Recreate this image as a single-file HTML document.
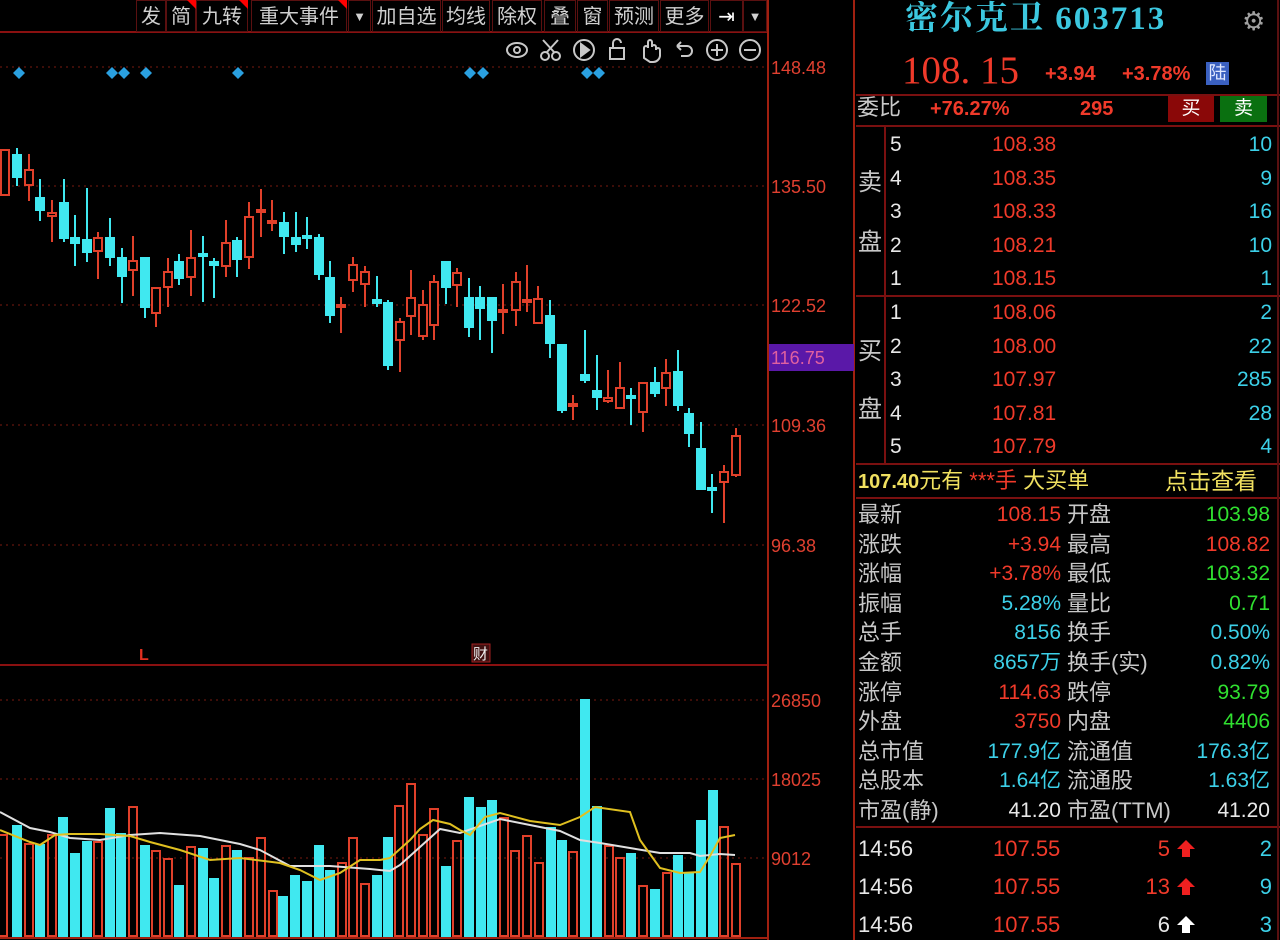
<!DOCTYPE html>
<html style="overflow:hidden;width:1280px;height:940px"><head><meta charset="utf-8"><style>
*{margin:0;padding:0;box-sizing:border-box}
body{width:1280px;height:940px;background:#000;overflow:hidden;position:relative;font-family:"Liberation Sans","Noto Sans CJK SC",sans-serif}
.t{position:absolute;white-space:nowrap;line-height:1}
.g{color:#c8c8c8}.r{color:#f03a2a}.c{color:#3cd0e8}.gr{color:#30e030}.w{color:#e8e8e8}.y{color:#f0e060}
.btn{position:absolute;top:0;height:32px;border:1px solid #5a1010;color:#d0d0d0;font-size:20px;line-height:32px;text-align:center;font-family:"Liberation Sans","Noto Sans CJK SC",sans-serif}
.tri{position:absolute;top:0;width:0;height:0;border-left:9px solid transparent;border-top:9px solid #f00}
.hl{position:absolute;height:2px;background:#7a1010}
.L{font-size:22px;color:#c8c8c8}
</style></head><body>

<svg width="856" height="940" style="position:absolute;left:0;top:0">
<g stroke="#7a1a10" stroke-dasharray="2,4" stroke-width="1">
<line x1="0" y1="67" x2="768" y2="67"/><line x1="0" y1="186" x2="768" y2="186"/><line x1="0" y1="305" x2="768" y2="305"/><line x1="0" y1="425" x2="768" y2="425"/><line x1="0" y1="545" x2="768" y2="545"/>
<line x1="0" y1="700" x2="768" y2="700"/><line x1="0" y1="779" x2="768" y2="779"/><line x1="0" y1="858" x2="768" y2="858"/>
</g>
<line x1="0" y1="32" x2="768" y2="32" stroke="#8a1010" stroke-width="2"/>
<line x1="0" y1="665" x2="768" y2="665" stroke="#8a1010" stroke-width="2"/>
<line x1="768" y1="0" x2="768" y2="940" stroke="#a02010" stroke-width="2"/>
<line x1="854" y1="0" x2="854" y2="940" stroke="#a02010" stroke-width="2"/>
<line x1="0" y1="938" x2="768" y2="938" stroke="#a02010" stroke-width="2"/>
<rect x="769" y="344" width="85" height="27" fill="#5a18a8"/>
<g font-family="Liberation Sans" font-size="18" fill="#e04030">
<text x="771" y="74">148.48</text><text x="771" y="193">135.50</text><text x="771" y="312">122.52</text><text x="771" y="364" fill="#e060a0">116.75</text><text x="771" y="432">109.36</text><text x="771" y="552">96.38</text>
<text x="771" y="707">26850</text><text x="771" y="786">18025</text><text x="771" y="865">9012</text>
</g>
<g fill="#2aa0e0">
<path d="M19 67l6 6-6 6-6-6z"/><path d="M112 67l6 6-6 6-6-6z"/><path d="M124 67l6 6-6 6-6-6z"/><path d="M146 67l6 6-6 6-6-6z"/><path d="M238 67l6 6-6 6-6-6z"/><path d="M470 67l6 6-6 6-6-6z"/><path d="M483 67l6 6-6 6-6-6z"/><path d="M587 67l6 6-6 6-6-6z"/><path d="M599 67l6 6-6 6-6-6z"/>
</g>
<g stroke="#c8c8c8" stroke-width="2" fill="none">
<ellipse cx="517" cy="50" rx="10" ry="7"/><circle cx="517" cy="50" r="3"/>
<circle cx="545" cy="56" r="4"/><circle cx="556" cy="56" r="4"/><path d="M547 52l11-12M554 52l-11-12"/>
<circle cx="584" cy="50" r="10"/><path d="M581 44v12l8-6z" fill="#c8c8c8"/>
<rect x="610" y="48" width="14" height="11"/><path d="M613 48v-5a4 4 0 0 1 8 0"/>
<path d="M644 58v-10a2 2 0 0 1 4 0v-6a2 2 0 0 1 4 0v5a2 2 0 0 1 4 0v3a2 2 0 0 1 4 0v6a7 7 0 0 1-7 6h-3z"/>
<path d="M677 46h10a5 5 0 0 1 0 10h-6M677 46l4-4M677 46l4 4"/>
<circle cx="717" cy="50" r="10"/><path d="M711 50h12M717 44v12"/>
<circle cx="750" cy="50" r="10"/><path d="M744 50h12"/>
</g>
<text x="139" y="660" font-size="16" fill="#e03020" font-family="Liberation Sans" font-weight="bold">L</text>
<rect x="472" y="644" width="18" height="18" fill="#401010" stroke="#a02020"/>
<text x="473" y="659" font-size="15" fill="#f0f0f0" font-family="Noto Sans CJK SC">财</text>

<g id="candles" stroke-width="2"></g>
<g id="vols" stroke-width="2"></g>
<polyline fill="none" stroke="#e0e0e0" stroke-width="2" points="0,812 30,828 50,832 70,838 100,840 130,835 160,833 200,836 240,844 260,850 290,866 330,866 370,869 390,871 400,865 420,847 440,829 460,833 500,819 540,827 560,831 580,840 600,843 630,848 660,853 690,853 700,856 720,854 735,855"/>
<polyline fill="none" stroke="#e0c020" stroke-width="2" points="0,830 30,842 40,845 55,835 70,834 100,834 130,836 150,842 180,850 210,860 240,858 280,863 300,870 320,880 340,873 360,860 380,860 390,858 410,840 420,829 433,820 450,824 460,830 470,835 485,817 500,813 530,821 560,825 580,817 595,807 630,812 640,840 660,868 680,873 700,872 710,856 720,838 735,835"/>
</svg>

<script>
(function(){
var C=[[5,150,195,150,195,'r'],[17,148,186,155,177,'c'],[29,154,201,170,185,'r'],[40,179,221,198,210,'c'],[52,200,242,213,216,'r'],[64,179,242,203,238,'c'],[75,215,266,238,243,'c'],[87,188,262,240,252,'c'],[98,232,279,238,251,'r'],[110,218,266,238,257,'c'],[122,248,303,258,276,'c'],[133,236,296,261,270,'r'],[145,258,318,258,307,'c'],[156,288,327,288,313,'r'],[168,258,307,272,287,'r'],[179,254,285,262,278,'c'],[191,230,296,258,277,'r'],[203,236,302,254,256,'c'],[214,258,298,262,265,'c'],[226,220,277,243,266,'r'],[237,237,277,241,259,'c'],[249,202,269,217,257,'r'],[261,189,237,210,212,'r'],[272,200,231,221,223,'r'],[284,212,254,223,236,'c'],[296,212,252,238,244,'c'],[307,217,249,236,238,'c'],[319,234,280,238,274,'c'],[330,261,323,278,315,'c'],[341,297,333,305,306,'r'],[353,257,292,265,280,'r'],[365,266,307,272,284,'r'],[377,276,307,300,303,'c'],[388,300,370,303,365,'c'],[400,318,372,322,340,'r'],[411,270,335,298,316,'r'],[423,290,340,305,336,'r'],[434,275,340,282,325,'r'],[446,262,304,262,287,'c'],[457,268,307,273,285,'r'],[469,278,337,298,327,'c'],[480,286,340,298,308,'c'],[492,298,353,298,320,'c'],[503,284,334,310,312,'r'],[516,272,326,282,310,'r'],[527,265,312,300,302,'r'],[538,286,323,299,323,'r'],[550,300,358,316,343,'c'],[562,345,413,345,410,'c'],[573,395,420,404,406,'r'],[585,330,383,375,380,'c'],[597,355,410,391,397,'c'],[608,370,403,398,401,'r'],[620,362,408,388,408,'r'],[631,388,425,396,398,'c'],[643,383,432,383,412,'r'],[655,367,397,383,393,'c'],[666,359,406,373,388,'r'],[678,350,411,372,405,'c'],[689,408,447,414,433,'c'],[701,422,490,449,489,'c'],[712,474,513,488,490,'c'],[724,465,523,472,482,'r'],[736,428,477,436,475,'r']];
var V=[[3,835,'r'],[17,826,'c'],[29,844,'r'],[40,845,'c'],[52,835,'r'],[63,818,'c'],[75,854,'c'],[87,842,'c'],[98,842,'r'],[110,809,'c'],[121,834,'c'],[133,807,'r'],[145,846,'c'],[156,851,'r'],[168,859,'r'],[179,886,'c'],[191,847,'r'],[203,849,'c'],[214,879,'c'],[226,846,'r'],[237,851,'c'],[249,858,'r'],[261,838,'r'],[273,891,'r'],[283,897,'c'],[295,876,'c'],[307,882,'c'],[319,846,'c'],[330,871,'c'],[342,863,'r'],[353,838,'r'],[365,884,'r'],[377,876,'c'],[388,838,'c'],[399,806,'r'],[411,784,'r'],[423,835,'r'],[434,809,'r'],[446,867,'c'],[457,841,'r'],[469,798,'c'],[481,808,'c'],[492,801,'c'],[504,818,'r'],[515,851,'r'],[527,836,'r'],[539,863,'r'],[551,828,'c'],[562,841,'c'],[573,852,'r'],[585,700,'c'],[597,807,'c'],[609,846,'r'],[620,858,'r'],[631,854,'c'],[643,886,'r'],[655,890,'c'],[667,873,'r'],[678,856,'c'],[689,873,'c'],[701,821,'c'],[713,791,'c'],[724,827,'r'],[736,864,'r']];
var R='#e0402a',Cy='#40e8f0',s='';
C.forEach(function(a){var col=a[5]=='r'?R:Cy;var h=Math.max(a[4]-a[3],2);
s+='<line x1="'+a[0]+'" y1="'+a[1]+'" x2="'+a[0]+'" y2="'+a[2]+'" stroke="'+col+'"/>';
s+='<rect x="'+(a[0]-4)+'" y="'+a[3]+'" width="8" height="'+h+'" fill="'+(a[5]=='r'?'#000':Cy)+'" stroke="'+col+'"/>';});
document.getElementById('candles').innerHTML=s;s='';
V.forEach(function(a){var col=a[2]=='r'?R:Cy;
s+='<rect x="'+(a[0]-4)+'" y="'+a[1]+'" width="8" height="'+(936-a[1])+'" fill="'+(a[2]=='r'?'none':Cy)+'" stroke="'+col+'"/>';});
document.getElementById('vols').innerHTML=s;
})();
</script>

<!-- toolbar -->
<div class="btn" style="left:136px;width:30px">发</div>
<div class="btn" style="left:166px;width:30px">简</div><div class="tri" style="left:187px"></div>
<div class="btn" style="left:196px;width:52px">九转</div><div class="tri" style="left:239px"></div>
<div class="btn" style="left:251px;width:96px">重大事件</div><div class="tri" style="left:338px"></div>
<div class="btn" style="left:348px;width:23px;font-size:13px">▼</div>
<div class="btn" style="left:372px;width:69px">加自选</div>
<div class="btn" style="left:442px;width:48px">均线</div>
<div class="btn" style="left:492px;width:50px">除权</div>
<div class="btn" style="left:544px;width:32px">叠</div>
<div class="btn" style="left:577px;width:31px">窗</div>
<div class="btn" style="left:609px;width:50px">预测</div>
<div class="btn" style="left:660px;width:49px">更多</div>
<div class="btn" style="left:710px;width:33px;color:#fff">⇥</div>
<div class="btn" style="left:743px;width:24px;font-size:13px">▼</div>

<!-- right panel -->
<div class="t" style="left:905px;top:3px;font-size:33px;letter-spacing:2px;color:#3cc8e0;font-family:'Liberation Serif','Noto Serif CJK SC',serif;font-weight:bold">密尔克卫 603713</div>
<div class="t" style="left:1242px;top:8px;font-size:26px;color:#a0a0a0">⚙</div>
<div class="t r" style="left:902px;top:51px;font-size:39px;font-family:'Liberation Serif','Noto Serif CJK SC',serif">108. 15</div>
<div class="t r" style="left:1045px;top:64px;font-size:20px;font-weight:bold">+3.94</div>
<div class="t r" style="left:1122px;top:64px;font-size:20px;font-weight:bold">+3.78%</div>
<div class="t" style="left:1206px;top:62px;width:23px;height:23px;background:#3a60c0;color:#e0e8ff;font-size:18px;text-align:center;line-height:23px">陆</div>
<div class="hl" style="left:856px;top:94px;width:424px"></div>
<div class="t L" style="left:857px;top:97px">委比</div>
<div class="t r" style="left:930px;top:99px;font-size:20px;font-weight:bold">+76.27%</div>
<div class="t r" style="left:1080px;top:99px;font-size:20px;font-weight:bold">295</div>
<div class="t" style="left:1168px;top:96px;width:46px;height:26px;background:#8a0808;color:#fff;font-size:19px;text-align:center;line-height:26px">买</div>
<div class="t" style="left:1220px;top:96px;width:47px;height:26px;background:#0a7010;color:#fff;font-size:19px;text-align:center;line-height:26px">卖</div>
<div class="hl" style="left:856px;top:125px;width:424px"></div>
<div style="position:absolute;left:884px;top:126px;width:2px;height:338px;background:#7a1010"></div>
<div class="hl" style="left:856px;top:295px;width:424px"></div>
<div class="t L" style="left:858px;top:171px;font-size:24px">卖</div>
<div class="t L" style="left:858px;top:231px;font-size:24px">盘</div>
<div class="t L" style="left:858px;top:340px;font-size:24px">买</div>
<div class="t L" style="left:858px;top:398px;font-size:24px">盘</div>

<div style="position:absolute;left:890px;top:128px;font-size:21px;line-height:33.5px" class="w">5<br>4<br>3<br>2<br>1</div>
<div style="position:absolute;left:992px;top:128px;font-size:21px;line-height:33.5px" class="r">108.38<br>108.35<br>108.33<br>108.21<br>108.15</div>
<div style="position:absolute;right:8px;top:128px;font-size:21px;line-height:33.5px;text-align:right" class="c">10<br>9<br>16<br>10<br>1</div>
<div style="position:absolute;left:890px;top:296px;font-size:21px;line-height:33.5px" class="w">1<br>2<br>3<br>4<br>5</div>
<div style="position:absolute;left:992px;top:296px;font-size:21px;line-height:33.5px" class="r">108.06<br>108.00<br>107.97<br>107.81<br>107.79</div>
<div style="position:absolute;right:8px;top:296px;font-size:21px;line-height:33.5px;text-align:right" class="c">2<br>22<br>285<br>28<br>4</div>
<div class="hl" style="left:856px;top:463px;width:424px"></div>
<div class="t y" style="left:858px;top:470px;font-size:22px"><span style="font-weight:bold;font-size:20px">107.40</span>元有 <span class="r">***手</span> 大买单</div>
<div class="t y" style="left:1165px;top:470px;font-size:23px">点击查看</div>
<div class="hl" style="left:856px;top:497px;width:424px"></div>

<div style="position:absolute;left:858px;top:500px;font-size:22px;line-height:29.6px" class="g">最新<br>涨跌<br>涨幅<br>振幅<br>总手<br>金额<br>涨停<br>外盘<br>总市值<br>总股本<br>市盈(静)</div>
<div style="position:absolute;left:940px;width:121px;top:500px;font-size:21px;line-height:29.6px;text-align:right"><span class="r">108.15</span><br><span class="r">+3.94</span><br><span class="r">+3.78%</span><br><span class="c">5.28%</span><br><span class="c">8156</span><br><span class="c">8657万</span><br><span class="r">114.63</span><br><span class="r">3750</span><br><span class="c">177.9亿</span><br><span class="c">1.64亿</span><br><span class="w">41.20</span></div>
<div style="position:absolute;left:1067px;top:500px;font-size:22px;line-height:29.6px" class="g">开盘<br>最高<br>最低<br>量比<br>换手<br>换手(实)<br>跌停<br>内盘<br>流通值<br>流通股<br>市盈(TTM)</div>
<div style="position:absolute;right:10px;width:130px;top:500px;font-size:21px;line-height:29.6px;text-align:right"><span class="gr">103.98</span><br><span class="r">108.82</span><br><span class="gr">103.32</span><br><span class="gr">0.71</span><br><span class="c">0.50%</span><br><span class="c">0.82%</span><br><span class="gr">93.79</span><br><span class="gr">4406</span><br><span class="c">176.3亿</span><br><span class="c">1.63亿</span><br><span class="w">41.20</span></div>
<div class="hl" style="left:856px;top:826px;width:424px"></div>

<div style="position:absolute;left:858px;top:830px;font-size:22px;line-height:38px" class="w">14:56<br>14:56<br>14:56</div>
<div style="position:absolute;left:993px;top:830px;font-size:22px;line-height:38px" class="r">107.55<br>107.55<br>107.55</div>
<div style="position:absolute;left:1110px;width:60px;top:830px;font-size:22px;line-height:38px;text-align:right"><span class="r">5</span><br><span class="r">13</span><br><span class="w">6</span></div>
<svg width="24" height="120" style="position:absolute;left:1175px;top:836px">
<path d="M11 4l9 9h-5v8h-8v-8h-5z" fill="#f02020"/>
<path d="M11 42l9 9h-5v8h-8v-8h-5z" fill="#f02020"/>
<path d="M11 80l9 9h-5v8h-8v-8h-5z" fill="#fff"/>
</svg>
<div style="position:absolute;right:8px;top:830px;font-size:22px;line-height:38px;text-align:right" class="c">2<br>9<br>3</div>
<div style="position:absolute;left:1277px;top:0;width:2px;height:940px;background:#5a1010"></div>
</body></html>
